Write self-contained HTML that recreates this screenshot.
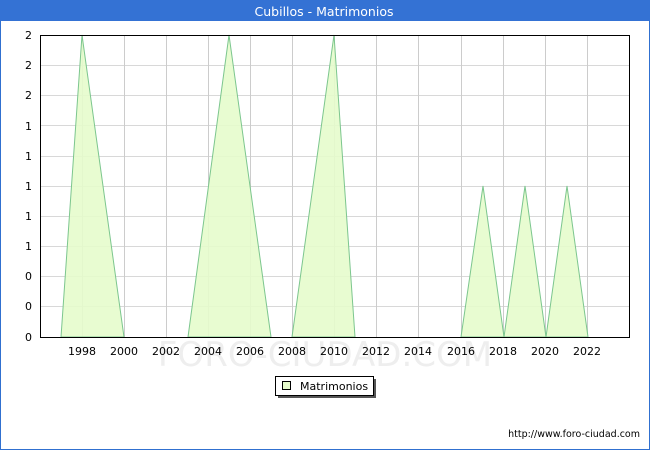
<!DOCTYPE html><html><head><style>
body{margin:0;width:650px;height:450px;overflow:hidden;font-family:"DejaVu Sans","Liberation Sans",sans-serif;}
</style></head><body>
<svg width="650" height="450" xmlns="http://www.w3.org/2000/svg" font-family="DejaVu Sans, Liberation Sans, sans-serif">
<rect x="0" y="0" width="650" height="450" fill="#fff"/>
<rect x="0.5" y="0.5" width="649" height="449" fill="none" stroke="#3070d0"/>
<rect x="0" y="0" width="650" height="21" fill="#3472d4"/>
<text x="324" y="16" fill="#fff" font-size="12.5" text-anchor="middle">Cubillos - Matrimonios</text>
<g stroke="#d8d8d8" stroke-width="1">
<line x1="40" x2="630" y1="65.5" y2="65.5"/><line x1="40" x2="630" y1="95.5" y2="95.5"/><line x1="40" x2="630" y1="125.5" y2="125.5"/><line x1="40" x2="630" y1="156.5" y2="156.5"/><line x1="40" x2="630" y1="186.5" y2="186.5"/><line x1="40" x2="630" y1="216.5" y2="216.5"/><line x1="40" x2="630" y1="246.5" y2="246.5"/><line x1="40" x2="630" y1="276.5" y2="276.5"/><line x1="40" x2="630" y1="306.5" y2="306.5"/>
</g>
<g stroke="#cccccc">
<line x1="82.5" x2="82.5" y1="35" y2="337"/><line x1="124.5" x2="124.5" y1="35" y2="337"/><line x1="166.5" x2="166.5" y1="35" y2="337"/><line x1="208.5" x2="208.5" y1="35" y2="337"/><line x1="250.5" x2="250.5" y1="35" y2="337"/><line x1="292.5" x2="292.5" y1="35" y2="337"/><line x1="334.5" x2="334.5" y1="35" y2="337"/><line x1="376.5" x2="376.5" y1="35" y2="337"/><line x1="418.5" x2="418.5" y1="35" y2="337"/><line x1="461.5" x2="461.5" y1="35" y2="337"/><line x1="503.5" x2="503.5" y1="35" y2="337"/><line x1="545.5" x2="545.5" y1="35" y2="337"/><line x1="587.5" x2="587.5" y1="35" y2="337"/>
</g>
<text x="325" y="366" font-size="34" fill="#eeeeee" text-anchor="middle">FORO-CIUDAD.COM</text>
<g fill="#e6fccc" fill-opacity="0.9" stroke="#7cc68e" stroke-width="1">
<polygon points="61,337 82,35 124,337"/>
<polygon points="188,337 229,35 271,337"/>
<polygon points="292,337 334,35 355,337"/>
<polygon points="461,337 483,186 504,337"/>
<polygon points="504,337 525,186 546,337"/>
<polygon points="546,337 567,186 588,337"/>
</g>
<rect x="40.5" y="35.5" width="589" height="302" fill="none" stroke="#000"/>
<g font-size="11" fill="#000" text-anchor="end">
<text x="32" y="39">2</text><text x="32" y="69">2</text><text x="32" y="99">2</text><text x="32" y="130">1</text><text x="32" y="160">1</text><text x="32" y="190">1</text><text x="32" y="220">1</text><text x="32" y="250">1</text><text x="32" y="280">0</text><text x="32" y="310">0</text><text x="32" y="341">0</text>
</g>
<g font-size="11" fill="#000" text-anchor="middle">
<text x="82" y="355">1998</text><text x="124" y="355">2000</text><text x="166" y="355">2002</text><text x="208" y="355">2004</text><text x="250" y="355">2006</text><text x="292" y="355">2008</text><text x="334" y="355">2010</text><text x="376" y="355">2012</text><text x="418" y="355">2014</text><text x="461" y="355">2016</text><text x="503" y="355">2018</text><text x="545" y="355">2020</text><text x="587" y="355">2022</text>
</g>
<rect x="278" y="379" width="98" height="19" fill="#555"/>
<rect x="275.5" y="376.5" width="98" height="19" fill="#fff" stroke="#000"/>
<rect x="282.5" y="381.5" width="8" height="8" fill="#e6fccc" stroke="#000"/>
<text x="300" y="390" font-size="11">Matrimonios</text>
<text x="640" y="437" font-size="9.5" text-anchor="end">http://www.foro-ciudad.com</text>
</svg>
</body></html>
